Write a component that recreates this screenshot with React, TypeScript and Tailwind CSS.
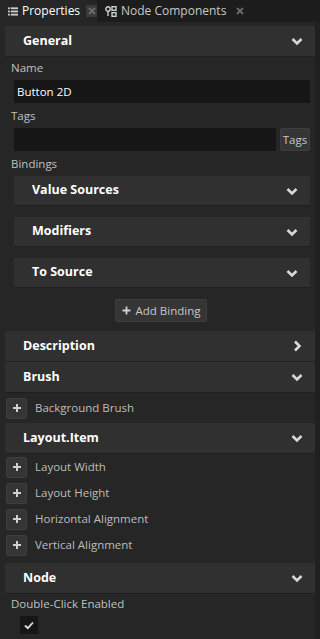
import React from "react";

const font = { fontFamily: '"Open Sans", "Noto Sans", sans-serif' };

const Chevron = ({ right = false }: { right?: boolean }) => (
  <svg width="14" height="14" viewBox="0 0 14 14" className="text-[#d8d8d8]">
    {right ? (
      <path d="M5 2.5 L9.5 7 L5 11.5" fill="none" stroke="currentColor" strokeWidth="2.6" />
    ) : (
      <path d="M2.5 5 L7 9.5 L11.5 5" fill="none" stroke="currentColor" strokeWidth="2.6" />
    )}
  </svg>
);

const Header = ({ title, right = false, inset = false }: { title: string; right?: boolean; inset?: boolean }) => (
  <div
    className={`flex items-center justify-between bg-[#303030] border-b border-[#1f1f1f] ${
      inset ? "h-[30px] pl-[18px] pr-[11px]" : "h-[31px] pl-[18px] pr-[11px]"
    }`}
  >
    <span className="text-[12.5px] font-bold text-white">{title}</span>
    <Chevron right={right} />
  </div>
);

const PlusRow = ({ label }: { label: string }) => (
  <div className="flex items-center h-[26px] pl-[1px]">
    <div className="w-[21px] h-[21px] rounded-[2px] bg-[#353535] border border-[#3e3e3e] flex items-center justify-center">
      <svg width="10" height="10" viewBox="0 0 10 10">
        <path d="M5 1 V9 M1 5 H9" stroke="#d0d0d0" strokeWidth="2" />
      </svg>
    </div>
    <span className="ml-[8px] text-[11.5px] text-[#bdbdbd]">{label}</span>
  </div>
);

const TabClose = ({ active }: { active: boolean }) => (
  <span
    className={`ml-[6px] w-[12px] h-[12px] flex items-center justify-center ${active ? "bg-[#3a3a3a]" : ""}`}
  >
    <svg width="8" height="8" viewBox="0 0 8 8">
      <path d="M1 1 L7 7 M7 1 L1 7" stroke="#6a6a6a" strokeWidth="2" />
    </svg>
  </span>
);

export default function App() {
  return (
    <div className="w-[320px] h-[639px] bg-[#262626] overflow-hidden flex flex-col" style={font}>
      {/* tabs */}
      <div className="flex h-[22px] bg-[#1c1c1c] shrink-0">
        <div className="flex items-center w-[97px] pl-[8px] bg-[#262626]">
          <svg width="11" height="10" viewBox="0 0 11 10" className="mr-[4px]">
            <rect x="0" y="1" width="2" height="2" fill="#cfcfcf" />
            <rect x="3" y="1" width="8" height="2" fill="#cfcfcf" />
            <rect x="0" y="4.5" width="2" height="2" fill="#cfcfcf" />
            <rect x="3" y="4.5" width="8" height="2" fill="#cfcfcf" />
            <rect x="0" y="8" width="2" height="2" fill="#cfcfcf" />
            <rect x="3" y="8" width="8" height="2" fill="#cfcfcf" />
          </svg>
          <span className="text-[12px] text-white">Properties</span>
          <TabClose active />
        </div>
        <div className="flex items-center pl-[8px] pr-[4px]">
          <svg width="12" height="11" viewBox="0 0 12 11" className="mr-[4px]">
            <circle cx="3" cy="3" r="2.2" fill="none" stroke="#cfcfcf" strokeWidth="1.4" />
            <path d="M3 5.2 V10" stroke="#cfcfcf" strokeWidth="1.4" />
            <rect x="7" y="0.7" width="4" height="3.6" fill="none" stroke="#cfcfcf" strokeWidth="1.4" />
            <rect x="7" y="6.7" width="4" height="3.6" fill="none" stroke="#cfcfcf" strokeWidth="1.4" />
          </svg>
          <span className="text-[12px] text-[#c8c8c8]">Node Components</span>
          <span className="ml-[2px]">
            <TabClose active={false} />
          </span>
        </div>
      </div>

      <div className="flex flex-1 min-h-0">
        <div className="flex-1 min-w-0 pl-[5px] pt-[4px] flex flex-col">
          <Header title="General" />
          <div className="pl-[6px] pt-[2px]">
            <div className="text-[11.5px] text-[#c0c0c0] leading-[18px]">Name</div>
            <div className="mt-[3px] ml-[3px] mr-[5px] h-[23px] bg-[#161616] flex items-center pl-[3px] text-[11.5px] text-white">
              Button 2D
            </div>
            <div className="mt-[4px] text-[11.5px] text-[#c0c0c0] leading-[18px]">Tags</div>
            <div className="mt-[3px] ml-[3px] mr-[5px] flex gap-[4px]">
              <div className="flex-1 h-[23px] bg-[#161616]" />
              <div className="w-[30px] h-[23px] rounded-[2px] bg-[#353535] border border-[#3e3e3e] flex items-center justify-center text-[11.5px] text-[#c8c8c8]">
                Tags
              </div>
            </div>
            <div className="mt-[4px] text-[11.5px] text-[#c0c0c0] leading-[18px]">Bindings</div>
            <div className="ml-[3px] mr-[5px] mt-[3px] flex flex-col gap-[11px]">
              <Header title="Value Sources" inset />
              <Header title="Modifiers" inset />
              <Header title="To Source" inset />
            </div>
            <div className="flex justify-center mt-[11px] pr-[4px]">
              <div className="flex items-center h-[23px] px-[6px] rounded-[2px] bg-[#353535] border border-[#3e3e3e] text-[11.5px] text-[#c8c8c8]">
                <svg width="9" height="9" viewBox="0 0 9 9" className="mr-[5px]">
                  <path d="M4.5 0.5 V8.5 M0.5 4.5 H8.5" stroke="#d0d0d0" strokeWidth="1.8" />
                </svg>
                Add Binding
              </div>
            </div>
          </div>
          <div className="mt-[9px]">
            <Header title="Description" right />
            <Header title="Brush" />
            <div className="py-[2px]">
              <PlusRow label="Background Brush" />
            </div>
            <Header title="Layout.Item" />
            <div className="pt-[0px] pb-[5px]">
              <PlusRow label="Layout Width" />
              <PlusRow label="Layout Height" />
              <PlusRow label="Horizontal Alignment" />
              <PlusRow label="Vertical Alignment" />
            </div>
            <Header title="Node" />
            <div className="pl-[6px] pt-[1px]">
              <div className="text-[11.5px] text-[#c0c0c0] leading-[18px]">Double-Click Enabled</div>
              <div className="mt-[3px] ml-[9px] w-[18px] h-[18px] bg-[#161616] flex items-center justify-center">
                <svg width="10" height="9" viewBox="0 0 10 9">
                  <path d="M1 4.5 L3.8 7.2 L9 1.5" fill="none" stroke="#e0e0e0" strokeWidth="1.8" />
                </svg>
              </div>
            </div>
          </div>
        </div>
        <div className="w-[5px] bg-[#202020] shrink-0" />
      </div>
    </div>
  );
}
